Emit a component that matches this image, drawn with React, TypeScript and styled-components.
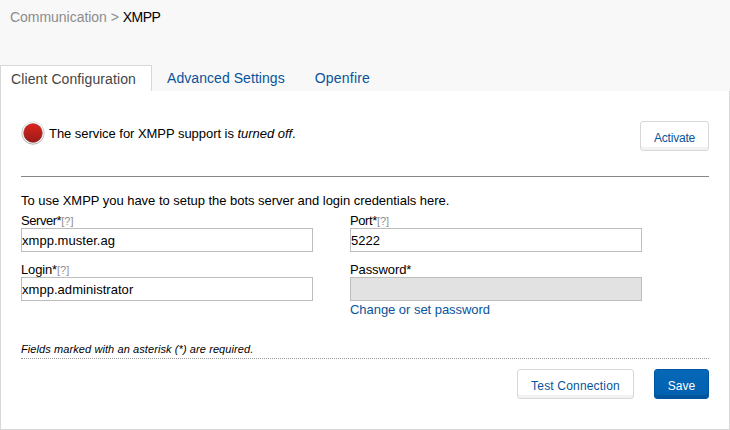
import React from "react";
import styled, { createGlobalStyle, css } from "styled-components";

const GlobalStyle = createGlobalStyle`
  * { box-sizing: border-box; }
  body {
    margin: 0;
    background: #f8f8f8;
    color: #000;
    font-family: "Liberation Sans", Arial, sans-serif;
    font-size: 13px;
  }
`;

const Page = styled.div`
  display: flex;
  flex-direction: column;
  width: 730px;
  height: 430px;
  overflow: hidden;
  white-space: nowrap;
`;

const Breadcrumb = styled.nav`
  height: 65px;
  padding: 7px 10px 0;
  font-size: 14px;
  line-height: 20px;
  letter-spacing: -0.03px;
  color: #8c8c8c;
`;

const Current = styled.span`
  letter-spacing: -0.55px;
  color: #000;
`;

const Tabs = styled.div`
  display: flex;
  height: 26px;
`;

const Tab = styled.a<{ $active?: boolean; $tracking?: number }>`
  height: 26px;
  padding: 3px 15px 0;
  font-size: 14px;
  line-height: 20px;
  letter-spacing: ${(p) => p.$tracking ?? 0}px;
  color: #07549b;
  ${(p) =>
    p.$active &&
    css`
      width: 152px;
      padding: 3px 10px 0;
      border: 1px solid #d8d8d8;
      border-bottom: 0;
      background: #fff;
      color: #444;
    `}
`;

const Panel = styled.main`
  display: flex;
  flex-direction: column;
  height: 339px;
  padding: 30px 20px 0;
  border: 1px solid #d8d8d8;
  border-top: 0;
  background: #fff;
`;

const StatusRow = styled.section`
  display: flex;
  align-items: flex-start;
  height: 56px;
  border-bottom: 1px solid #878787;
`;

const StatusText = styled.p`
  flex: 1;
  margin: 5px 0 0 4px;
  line-height: 16px;
  letter-spacing: -0.04px;
`;

const Light = styled.svg`
  width: 24px;
  height: 24px;
`;

const Button = styled.button<{ $primary?: boolean; $width: number; $tracking?: number }>`
  width: ${(p) => p.$width}px;
  height: 30px;
  padding: 3px 0 0;
  border: 1px solid #d8d8d8;
  border-radius: 3px;
  background: #fff;
  box-shadow: inset 0 -3px 0 #f2f2f2;
  color: #07549b;
  font: 12px "Liberation Sans", Arial, sans-serif;
  letter-spacing: ${(p) => p.$tracking ?? 0}px;
  ${(p) =>
    p.$primary &&
    css`
      border-color: #0055a0;
      background: linear-gradient(#0768b8, #0060b0);
      box-shadow: inset 0 -3px 0 #00549c;
      color: #fff;
    `}
`;

const Intro = styled.p`
  margin: 16px 0 0;
  line-height: 16px;
  letter-spacing: -0.03px;
`;

const Fields = styled.div`
  display: grid;
  grid-template-columns: 292px 292px;
  column-gap: 37px;
  row-gap: 9px;
  margin-top: 3px;
`;

const Label = styled.label<{ $tracking: number }>`
  display: flex;
  height: 16px;
  line-height: 17px;
  letter-spacing: ${(p) => p.$tracking}px;
`;

const Help = styled.span`
  padding-top: 1px;
  font-size: 11px;
  letter-spacing: 0;
  color: #8f8f8f;
`;

const Input = styled.input`
  display: block;
  width: 292px;
  height: 24px;
  padding: 0;
  border: 1px solid #bdbdbd;
  background: #fff;
  color: #000;
  font: 13px "Liberation Sans", Arial, sans-serif;
  letter-spacing: 0.04px;
  &:disabled {
    background: #e2e2e2;
  }
`;

const Link = styled.a`
  display: block;
  line-height: 17px;
  letter-spacing: -0.04px;
  color: #07549b;
`;

const Note = styled.p`
  height: 17px;
  margin: 24px 0 0;
  border-bottom: 1px dotted #999;
  font-size: 11px;
  font-style: italic;
  line-height: 14px;
  letter-spacing: 0.09px;
`;

const Actions = styled.div`
  display: flex;
  justify-content: flex-end;
  gap: 20px;
  margin-top: 10px;
`;

interface FieldProps {
  label: string;
  tracking?: number;
  value?: string;
  help?: boolean;
  disabled?: boolean;
  children?: React.ReactNode;
}

const Field = ({ label, tracking = 0, value = "", help, disabled, children }: FieldProps) => (
  <div>
    <Label $tracking={tracking}>
      {label}*{help && <Help>[?]</Help>}
    </Label>
    <Input defaultValue={value} disabled={disabled} aria-label={label} />
    {children}
  </div>
);

const StatusLight = () => (
  <Light viewBox="0 0 24 24">
    <defs>
      <linearGradient id="red" x1="0" y1="0" x2="0" y2="1">
        <stop offset="0" stopColor="#dc231c" />
        <stop offset="1" stopColor="#981b18" />
      </linearGradient>
      <linearGradient id="ring" x1="0" y1="0" x2="0" y2="1">
        <stop offset="0" stopColor="#dedede" />
        <stop offset="1" stopColor="#a0a0a0" />
      </linearGradient>
    </defs>
    <circle cx="12" cy="12" r="11.2" fill="#fff" stroke="url(#ring)" strokeWidth="0.9" />
    <circle cx="12" cy="12" r="9.4" fill="url(#red)" stroke="#8a3a36" strokeWidth="0.5" />
  </Light>
);

export default function App() {
  return (
    <>
      <GlobalStyle />
      <Page>
        <Breadcrumb>
          Communication &gt; <Current>XMPP</Current>
        </Breadcrumb>
        <Tabs>
          <Tab $active $tracking={0.1}>Client Configuration</Tab>
          <Tab $tracking={0.06}>Advanced Settings</Tab>
          <Tab $tracking={0.2}>Openfire</Tab>
        </Tabs>
        <Panel>
          <StatusRow>
            <StatusLight />
            <StatusText>
              The service for XMPP support is <em>turned off</em>.
            </StatusText>
            <Button $width={69} $tracking={-0.2}>Activate</Button>
          </StatusRow>
          <Intro>To use XMPP you have to setup the bots server and login credentials here.</Intro>
          <Fields>
            <Field label="Server" tracking={-0.45} value="xmpp.muster.ag" help />
            <Field label="Port" tracking={-0.4} value="5222" help />
            <Field label="Login" tracking={-0.15} value="xmpp.administrator" help />
            <Field label="Password" tracking={-0.1} disabled>
              <Link>Change or set password</Link>
            </Field>
          </Fields>
          <Note>Fields marked with an asterisk (*) are required.</Note>
          <Actions>
            <Button $width={117} $tracking={0.18}>Test Connection</Button>
            <Button $width={55} $primary>Save</Button>
          </Actions>
        </Panel>
      </Page>
    </>
  );
}
